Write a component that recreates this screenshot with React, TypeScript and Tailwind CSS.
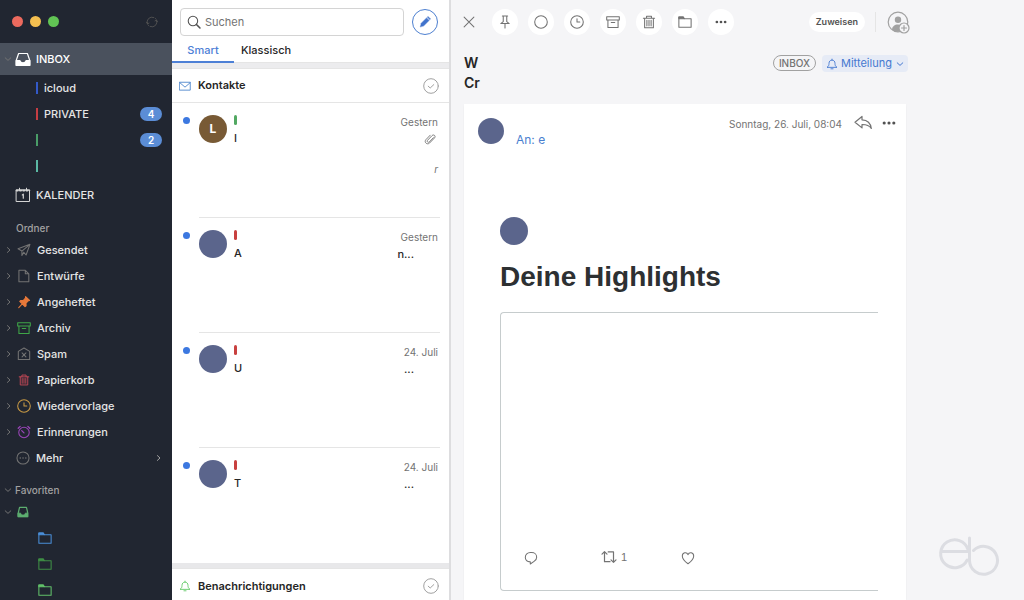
import React, { useState } from 'react';

type IconProps = { className?: string; children: React.ReactNode; box?: number; stroke?: number };

// Line icons share a 16 unit grid
const Icon = ({ className = 'size-4', children, box = 16, stroke = 1.2 }: IconProps) => (
    <svg
        className={`shrink-0 ${className}`}
        viewBox={`0 0 ${box} ${box}`}
        fill="none"
        stroke="currentColor"
        strokeWidth={stroke}
        strokeLinecap="round"
        strokeLinejoin="round"
        aria-hidden="true"
    >
        {children}
    </svg>
);

const Chevron = ({ className, down = false }: { className: string; down?: boolean }) => (
    <Icon className={className} box={8} stroke={1}>
        <path d={down ? 'M1.2 2.8L4 5.4l2.8-2.6' : 'M3.4 1.6L6 4 3.4 6.4'} />
    </Icon>
);

const TrayIcon = ({ className }: { className: string }) => (
    <Icon className={className}>
        <path d="M1.2 9.5L3.6 2.5h8.8l2.4 7v4.8H1.2z" />
        <path d="M1.2 9.5h3.6c.4 1.6 1.6 2.4 3.2 2.4s2.8-.8 3.2-2.4h3.6v4.8H1.2z" fill="currentColor" />
    </Icon>
);

const FavTrayIcon = ({ className }: { className: string }) => (
    <Icon className={className}>
        <path d="M3.4 1.8h9.2L14.3 9v5.2H1.7V9z" strokeWidth={1.6} />
        <path d="M1.7 9.5h3.1c.4 1.7 1.6 2.5 3.2 2.5s2.8-.8 3.2-2.5h3.1v4.7H1.7z" fill="currentColor" />
    </Icon>
);

const CalendarIcon = () => (
    <Icon className="size-4 text-neutral-300" stroke={1}>
        <path d="M1.5 2.8h13v11.7h-13z" />
        <path d="M1.5 3.6h13" strokeWidth={1.6} strokeDasharray="1.6 1.6" />
        <path d="M4.5 1.2v2M11.5 1.2v2" />
        <path d="M7.3 7.9l1-.7v4" strokeWidth={1.2} />
    </Icon>
);

const FolderIcon = ({ className }: { className: string }) => (
    <Icon className={className}>
        <path d="M1 2.4h5l1.2 1.8H15v9.8H1z" />
        <path d="M1 2.4h5l1.1 1.8H1z" fill="currentColor" />
    </Icon>
);

const ArchiveIcon = ({ className }: { className: string }) => (
    <Icon className={className}>
        <path d="M.8 2h14.4v3.6H.8zM2.2 5.6v8.6h11.6V5.6M6 8.6h4" />
    </Icon>
);

const TrashIcon = ({ className }: { className: string }) => (
    <Icon className={className}>
        <path d="M1.6 3.8h12.8M5.2 3.8V1.4h5.6v2.4M3 3.8v10.8h10V3.8M5.6 6v6.4M8 6v6.4M10.4 6v6.4" />
    </Icon>
);

const ClockIcon = ({ className }: { className: string }) => (
    <Icon className={className}>
        <circle cx="8" cy="8" r="7.2" />
        <path d="M8 4.2V8h3.2" />
    </Icon>
);

const BellIcon = ({ className }: { className: string }) => (
    <Icon className={className}>
        <path d="M1.8 12.2c1.8-1.2 2.2-2.8 2.2-5 0-2.6 1.6-4.4 4-4.4s4 1.8 4 4.4c0 2.2.4 3.8 2.2 5zM8 2.8V1.5M6.6 14.4h2.8" />
    </Icon>
);

const DotsIcon = ({ className }: { className: string }) => (
    <Icon className={className}>
        <g fill="currentColor" stroke="none">
            <circle cx="2.5" cy="8" r="1.8" />
            <circle cx="8" cy="8" r="1.8" />
            <circle cx="13.5" cy="8" r="1.8" />
        </g>
    </Icon>
);

const CheckCircle = () => (
    <Icon className="size-4 text-neutral-400" stroke={1}>
        <circle cx="8" cy="8" r="7.3" />
        <path d="M5.2 8.2l2 1.8 3.6-3.4" />
    </Icon>
);

const accounts = [
    { name: 'icloud', bar: 'bg-[#3359c8]', count: 0 },
    { name: 'PRIVATE', bar: 'bg-[#c53d43]', count: 4 },
    { name: '', bar: 'bg-[#4a9d68]', count: 2 },
    { name: '', bar: 'bg-[#5bb8a4]', count: 0 },
];

const folders = [
    {
        name: 'Gesendet',
        icon: (
            <Icon className="size-3.5 text-neutral-500">
                <path d="M14.8 1.5L1.2 6.6l4.4 2.6L14.8 1.5l-4.4 12.2-2.6-3M5.6 9.2v5l2.2-3.5" />
            </Icon>
        ),
    },
    {
        name: 'Entwürfe',
        icon: (
            <Icon className="size-3.5 text-neutral-500">
                <path d="M2.2 1.5h7.3l4 4v9H2.2zM9.5 1.5v4h4" />
            </Icon>
        ),
    },
    {
        name: 'Angeheftet',
        icon: (
            <Icon className="size-3.5 text-[#e8793a]">
                <path
                    d="M9.8 1.8l4.6 4.4-1.6.5-2.5 2.7.1 2.9-1.2 1L3.1 7.2l1.2-1 2.8.2 2.5-2.8zM6 10.2l-4 4.2"
                    fill="currentColor"
                />
            </Icon>
        ),
    },
    { name: 'Archiv', icon: <ArchiveIcon className="size-3.5 text-[#3fa648]" /> },
    {
        name: 'Spam',
        icon: (
            <Icon className="size-3.5 text-neutral-500">
                <path d="M1.5 5L8 1.2 14.5 5v9.3h-13zM5.8 6.8l4.4 4.6M10.2 6.8l-4.4 4.6" />
            </Icon>
        ),
    },
    { name: 'Papierkorb', icon: <TrashIcon className="size-3 mx-px text-[#c94a58]" /> },
    { name: 'Wiedervorlage', icon: <ClockIcon className="size-3.5 text-[#c99a45]" /> },
    {
        name: 'Erinnerungen',
        icon: (
            <Icon className="size-3.5 text-[#9a45b8]">
                <circle cx="8" cy="8.6" r="6" />
                <path d="M8 9L5.4 6.4M1.4 3.8l2.2-2.2M14.6 3.8l-2.2-2.2" strokeWidth={1.5} />
            </Icon>
        ),
    },
];

const favorites = ['text-[#4a8ed8]', 'text-[#3f8f45]', 'text-[#62c06a]'];

const mails = [
    { letter: 'L', avatar: 'bg-[#785a35]', bar: 'bg-[#52a862]', subject: 'I', date: 'Gestern', end: '', attached: true },
    { letter: '', avatar: 'bg-[#5b658c]', bar: 'bg-[#c8403f]', subject: 'A', date: 'Gestern', end: 'n...', attached: false },
    { letter: '', avatar: 'bg-[#5b658c]', bar: 'bg-[#c8403f]', subject: 'U', date: '24. Juli', end: '...', attached: false },
    { letter: '', avatar: 'bg-[#5b658c]', bar: 'bg-[#c8403f]', subject: 'T', date: '24. Juli', end: '...', attached: false },
];

const tools = [
    {
        label: 'Anheften',
        icon: (
            <Icon className="size-3.5 text-neutral-500">
                <path d="M5 1.2h6M6 1.2v6.4L3.2 9.8h9.6L10 7.6V1.2M8 9.8v5" />
            </Icon>
        ),
    },
    {
        label: 'Als gelesen markieren',
        icon: (
            <Icon className="size-3.5 text-neutral-500">
                <circle cx="8" cy="8" r="7.2" />
            </Icon>
        ),
    },
    { label: 'Wiedervorlage', icon: <ClockIcon className="size-3.5 text-neutral-500" /> },
    { label: 'Archivieren', icon: <ArchiveIcon className="size-3.5 text-neutral-500" /> },
    { label: 'Löschen', icon: <TrashIcon className="size-3.5 text-neutral-500" /> },
    { label: 'Verschieben', icon: <FolderIcon className="size-3.5 text-neutral-500" /> },
    { label: 'Mehr', icon: <DotsIcon className="size-3 text-neutral-600" /> },
];

const Sidebar = () => (
    <nav className="w-43 shrink-0 bg-[#212631] text-[11px] font-medium text-neutral-200">
        <div className="flex h-[43px] items-center gap-[7px] pr-3.5 pl-3">
            <button aria-label="Schließen" className="size-[11px] rounded-full bg-[#ec6a5e]" />
            <button aria-label="Minimieren" className="size-[11px] rounded-full bg-[#f4bf50]" />
            <button aria-label="Maximieren" className="size-[11px] rounded-full bg-[#61c454]" />
            <button aria-label="Aktualisieren" className="ml-auto text-neutral-600">
                <Icon className="size-3">
                    <path d="M2 10.5A6.5 6.5 0 0 1 10.5 2M14 5.5A6.5 6.5 0 0 1 5.5 14M2 10.5L.7 8.5M2 10.5l2-1M14 5.5l1.3 2M14 5.5l-2 1M12.5 3.2l.4.4M3.1 12.4l.4.4" />
                </Icon>
            </button>
        </div>

        <a href="#inbox" className="flex h-8 items-center bg-[#4a515d] pl-1 text-white">
            <Chevron down className="size-2 text-neutral-500" />
            <TrayIcon className="mr-[5px] ml-[3px] size-4" />
            INBOX
        </a>
        {accounts.map((account, i) => (
            <a key={i} href="#account" aria-label={account.name || 'Konto'} className="flex h-6.5 items-center pr-2.5 pl-9">
                <span className={`mr-1.5 h-3 w-0.5 ${account.bar}`} />
                {account.name}
                {account.count > 0 && (
                    <span className="ml-auto w-[22px] rounded-full bg-[#5b8dd6] text-center text-[10px] leading-3.5 font-semibold text-white">
                        {account.count}
                    </span>
                )}
            </a>
        ))}
        <a href="#kalender" className="flex h-8 items-center gap-[5px] pl-[15px]">
            <CalendarIcon />
            KALENDER
        </a>

        <h2 className="h-6.5 pt-2 pl-4 text-[10px] leading-[18px] text-neutral-400">Ordner</h2>
        {folders.map((folder) => (
            <a key={folder.name} href="#ordner" className="flex h-6.5 items-center pl-1">
                <Chevron className="mr-[5px] size-2 text-neutral-500" />
                {folder.icon}
                <span className="ml-1.5">{folder.name}</span>
            </a>
        ))}
        <a href="#mehr" className="flex h-6.5 items-center pr-2.5 pl-4">
            <Icon className="size-3.5 text-neutral-500">
                <circle cx="8" cy="8" r="6.9" />
                <path d="M4.8 8h.1M8 8h.1M11.2 8h.1" strokeWidth={1.6} />
            </Icon>
            <span className="ml-1.5">Mehr</span>
            <Chevron className="ml-auto size-2 text-neutral-400" />
        </a>

        <h2 className="flex h-7 items-center gap-[3px] pt-2.5 pl-1 text-[10px] text-neutral-400">
            <Chevron down className="size-2 text-neutral-500" />
            Favoriten
        </h2>
        <a href="#favoriten" aria-label="Favoriten Inbox" className="flex h-6.5 items-center gap-[5px] pl-1">
            <Chevron down className="size-2 text-neutral-500" />
            <FavTrayIcon className="size-3 text-[#5dae70]" />
        </a>
        {favorites.map((color) => (
            <a key={color} href="#favorit" aria-label="Favorit" className="flex h-6.5 items-center pl-9.5">
                <FolderIcon className={`size-3.5 ${color}`} />
            </a>
        ))}
    </nav>
);

const MailList = () => {
    const [tab, setTab] = useState('Smart');
    const [query, setQuery] = useState('');

    return (
        <section className="w-[279px] shrink-0 border-r-2 border-[#dddddf] bg-white">
            <div className="flex items-center gap-2 pt-2 pr-[11px] pl-2">
                <label className="flex h-7 min-w-0 flex-1 items-center gap-1 rounded border border-neutral-300 px-1.5">
                    <Icon className="size-3.5 text-neutral-600">
                        <circle cx="6.8" cy="6.8" r="5.4" />
                        <path d="M10.8 10.8l4 4" strokeWidth={1.8} />
                    </Icon>
                    <input
                        type="text"
                        aria-label="Suchen"
                        placeholder="Suchen"
                        value={query}
                        onChange={(e) => setQuery(e.target.value)}
                        className="w-full min-w-0 text-[11px] outline-none placeholder:text-neutral-500"
                    />
                </label>
                <button
                    aria-label="Neue E-Mail"
                    className="flex size-6.5 items-center justify-center rounded-full border border-[#4d7fd0] text-[#4173cc]"
                >
                    <Icon className="size-3" stroke={0.6}>
                        <path d="M1.8 14.2l1.2-4.6 7-7 3.4 3.4-7 7z" fill="currentColor" />
                        <path d="M11 1.6l1-1 3.4 3.4-1 1z" fill="currentColor" />
                    </Icon>
                </button>
            </div>
            <div className="flex h-[27px] border-b border-neutral-200 text-[11px] font-medium">
                {['Smart', 'Klassisch'].map((name) => (
                    <button
                        key={name}
                        onClick={() => setTab(name)}
                        className={`-mb-px border-b-2 pt-1 ${
                            tab === name ? 'w-[62px] border-[#4d80d6] text-[#4d80d6]' : 'border-transparent px-[7px] text-neutral-800'
                        }`}
                    >
                        {name}
                    </button>
                ))}
            </div>
            <div className="h-1.5 border-b border-neutral-200 bg-[#ececee]" />

            <div className="flex h-[34px] items-center border-b border-neutral-200 pr-2.5 pl-[7px] text-[11px] font-semibold text-neutral-800">
                <Icon className="mr-[7px] size-3 text-[#4d86cc]">
                    <path d="M1 3h14v10.5H1zM1 3.5l7 6 7-6" />
                </Icon>
                <h2>Kontakte</h2>
                <button aria-label="Kontakte erledigt" className="ml-auto">
                    <CheckCircle />
                </button>
            </div>

            <ul>
                {mails.map((mail, i) => (
                    <li key={i} className="group flex min-h-[115px] pr-[9px] pl-[11px]">
                        <span className="mt-3.5 mr-[9px] size-[7px] rounded-full bg-[#3c78e0]" />
                        <div className="flex flex-1 border-b border-neutral-200 pt-3 pr-0.5 group-last:border-transparent">
                            <span
                                className={`flex size-7 items-center justify-center rounded-full text-xs font-bold text-white ${mail.avatar}`}
                            >
                                {mail.letter}
                            </span>
                            <div className="ml-[7px] text-[11px] font-medium text-neutral-800">
                                <span className={`block h-2.5 w-[3px] rounded-full ${mail.bar}`} />
                                <p className="mt-[3px] leading-5">{mail.subject}</p>
                            </div>
                            <div className="ml-auto flex flex-col items-end text-[10px] text-neutral-500">
                                <span className="leading-3.5">{mail.date}</span>
                                {mail.attached && (
                                    <>
                                        <Icon className="mt-1 mr-0.5 size-3">
                                            <path d="M12.6 6.2l-5.4 5.6c-1.7 1.7-4-.4-2.3-2.3l5.8-6c2.4-2.3 5.6.6 3.2 3.2l-6.4 6.6c-3.4 3.2-8-1.2-4.8-4.6l5.6-5.8" />
                                        </Icon>
                                        <span className="mt-3.5 leading-5 italic">r</span>
                                    </>
                                )}
                                {mail.end && (
                                    <span className="mr-6 text-[11px] leading-5 font-medium text-neutral-800">{mail.end}</span>
                                )}
                            </div>
                        </div>
                    </li>
                ))}
            </ul>

            <div className="h-1.5 border-b border-neutral-200 bg-[#e8e8ea]" />
            <div className="flex h-[34px] items-center pr-2.5 pl-[7px] text-[11px] font-semibold text-neutral-800">
                <BellIcon className="mr-[7px] size-3 text-[#62c866]" />
                <h2>Benachrichtigungen</h2>
                <button aria-label="Benachrichtigungen erledigt" className="ml-auto">
                    <CheckCircle />
                </button>
            </div>
        </section>
    );
};

const MailView = () => (
    <main className="flex min-w-0 flex-1 flex-col pl-[13px]">
        <div className="-mr-0.5 -ml-2 flex h-11 items-center gap-2.5">
            <button aria-label="Nachricht schließen" className="flex size-6.5 items-center justify-center text-neutral-500">
                <Icon className="size-3" stroke={1.4}>
                    <path d="M1.5 1.5l13 13M14.5 1.5l-13 13" />
                </Icon>
            </button>
            {tools.map((tool) => (
                <button key={tool.label} aria-label={tool.label} className="flex size-6.5 items-center justify-center rounded-full bg-white">
                    {tool.icon}
                </button>
            ))}
            <button className="ml-auto rounded-full bg-white px-[7px] text-[9px] leading-5 font-semibold text-neutral-600">Zuweisen</button>
            <span className="h-5 w-px bg-neutral-200" />
            <button aria-label="Konto hinzufügen" className="text-neutral-400">
                <Icon className="size-6" box={24}>
                    <circle cx="12" cy="12" r="9.8" />
                    <g fill="currentColor" stroke="none">
                        <circle cx="12" cy="9.8" r="3.2" />
                        <path d="M6 20c0-3.5 2.6-5.4 6-5.4 2 0 3.6.8 4.6 2l-1 4.5c-3.4 1.2-7 1-9.6-1.1z" />
                    </g>
                    <circle cx="18" cy="18" r="5" fill="#f5f5f7" />
                    <path d="M18 15.5v5M15.5 18h5" />
                </Icon>
            </button>
        </div>

        <div className="flex h-15 items-start pt-[9px]">
            <h1 className="text-sm leading-5 font-semibold text-neutral-800">
                W
                <br />
                Cr
            </h1>
            <span className="mt-0.5 ml-auto rounded-full border border-neutral-400 px-[5px] text-[10px] leading-3.5 font-medium text-neutral-500">
                INBOX
            </span>
            <label className="relative mt-0.5 ml-1.5 flex h-[17px] items-center rounded-sm bg-[#e6ebf6] text-[#4478d0]">
                <BellIcon className="ml-1 size-3" />
                <select aria-label="Kategorie" className="appearance-none pr-4 pl-[3px] text-[11px] outline-none">
                    <option>Mitteilung</option>
                </select>
                <Chevron down className="pointer-events-none absolute right-1 size-2" />
            </label>
        </div>

        <article className="mr-0.5 flex flex-1 flex-col bg-white pt-3.5 shadow-xs">
            <header className="flex items-start pr-2.5 pl-3.5">
                <span className="size-6.5 rounded-full bg-[#5b658c]" />
                <a href="#empfaenger" className="mt-3 ml-3 text-xs leading-5 text-[#4a7fcf]">
                    An: e
                </a>
                <time className="ml-auto text-[10px] leading-3 text-neutral-500">Sonntag, 26. Juli, 08:04</time>
                <button aria-label="Antworten" className="-mt-1 ml-3 text-neutral-500">
                    <Icon className="size-[18px]" box={18}>
                        <path d="M1 8.2L8 2.5v3.3c5.2.2 8.6 3 9.3 8.7-2-3-4.8-4.1-9.3-4v3.4z" />
                    </Icon>
                </button>
                <button aria-label="Weitere Aktionen" className="-mt-0.5 ml-2.5 text-neutral-600">
                    <DotsIcon className="size-3.5" />
                </button>
            </header>
            <div className="pt-[67px] pr-7 pl-9">
                <span className="block size-7 rounded-full bg-[#5b658c]" />
                <h2 className="mt-3.5 font-['Liberation_Sans',Arial,sans-serif] text-[28px] leading-9 font-bold text-[#2d3032]">
                    Deine Highlights
                </h2>
                <div className="mt-[17px] flex min-h-[279px] items-end rounded-l border border-r-0 border-[#c6cccd] pb-[25px] pl-[23px] text-neutral-500">
                    <button aria-label="Antworten" className="w-[77px]">
                        <Icon className="size-3.5">
                            <path d="M7.2 12.4C3.8 12.4 1.5 10.2 1.5 7.2S4 1.8 7.2 1.8h1.6c3.2 0 5.7 2.2 5.7 5.2 0 2.2-1.2 3.6-3 4.8L7.2 14.8z" />
                        </Icon>
                    </button>
                    <button aria-label="Teilen" className="flex w-20 items-center gap-1 font-['Liberation_Sans',Arial,sans-serif] text-[11px] leading-3.5">
                        <Icon className="size-4">
                            <path d="M1 5.2l2.5-2.5L6 5.2M3.5 2.7v10H9M15 10.8l-2.5 2.5-2.5-2.5M12.5 13.3V2.9H7.2" />
                        </Icon>
                        1
                    </button>
                    <button aria-label="Gefällt mir">
                        <Icon className="size-3.5">
                            <path d="M8 14.6C4 11.8 1.5 9 1.5 5.8 1.5 1.6 6.6.6 8 4.2 9.4.6 14.5 1.6 14.5 5.8c0 3.2-2.5 6-6.5 8.8z" />
                        </Icon>
                    </button>
                </div>
            </div>
        </article>
    </main>
);

export default function App() {
    return (
        <div className="flex h-screen overflow-hidden bg-[#f5f5f7] font-[Inter,sans-serif]">
            <Sidebar />
            <MailList />
            <MailView />
            <aside className="flex w-29 shrink-0 items-end justify-end pr-6 pb-6">
                <svg
                    className="h-10 w-16 text-[#dcdde2]"
                    viewBox="0 0 64 40"
                    fill="none"
                    stroke="currentColor"
                    strokeWidth="3"
                    strokeLinecap="round"
                    aria-hidden="true"
                >
                    <path d="M6 15.5h26M31.2 24A14 14 0 1 1 32 13.5" />
                    <path d="M33.5 2v22.5A14 14 0 1 0 37.5 14.5" />
                </svg>
            </aside>
        </div>
    );
}
